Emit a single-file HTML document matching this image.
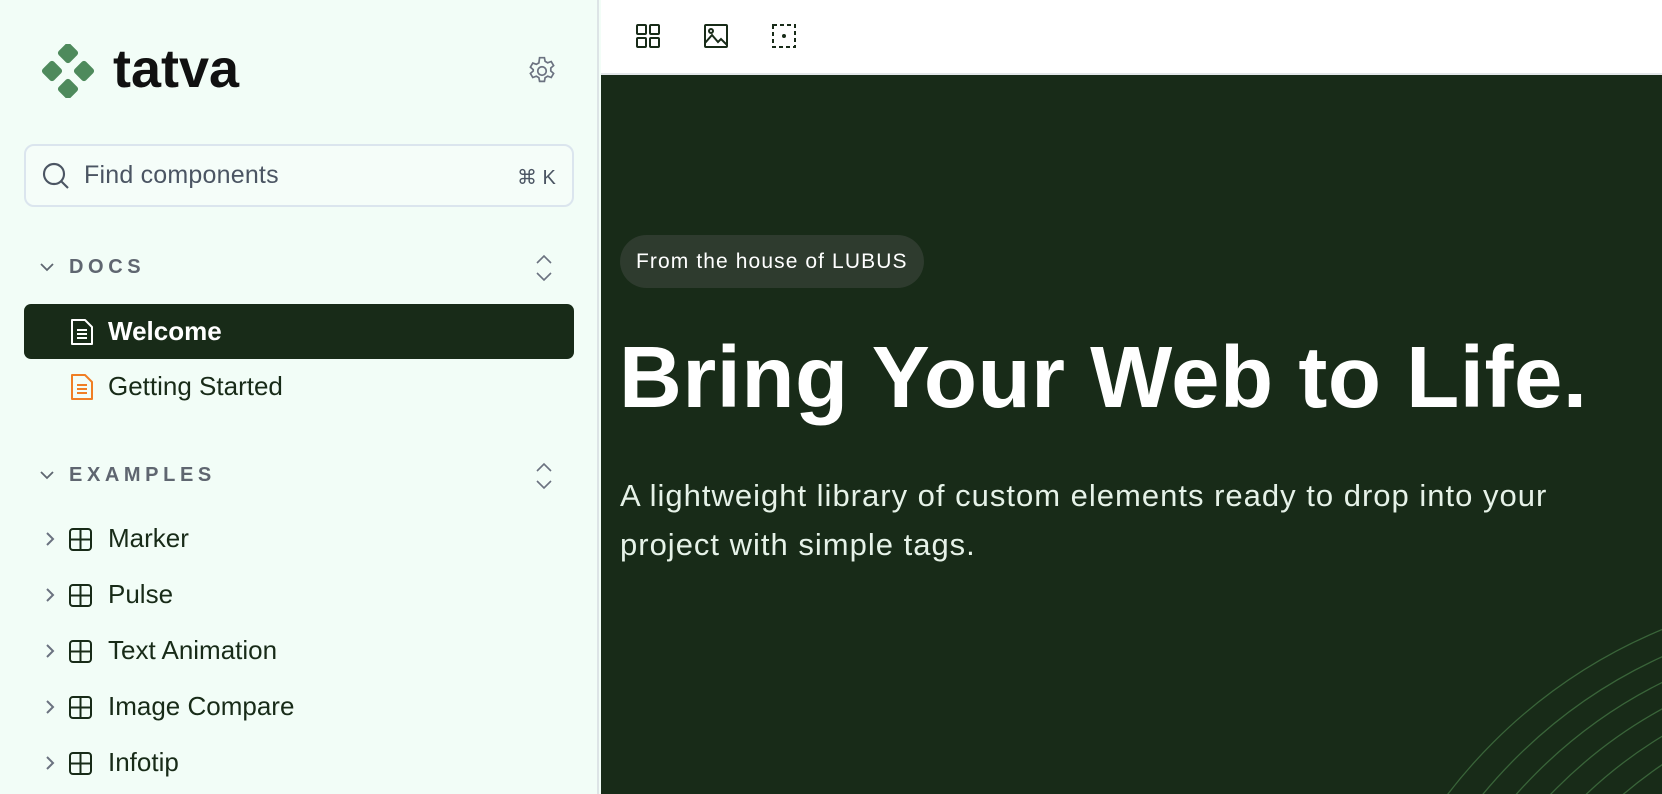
<!DOCTYPE html>
<html><head><meta charset="utf-8"><style>
*{box-sizing:border-box;margin:0;padding:0}
html,body{width:1662px;height:794px;overflow:hidden}
body{font-family:"Liberation Sans",sans-serif;background:#f2fdf7;position:relative}
.side{position:absolute;left:0;top:0;width:599px;height:794px;background:#f2fdf7;border-right:2px solid #dde4e6;overflow:hidden}
.main{position:absolute;left:601px;top:0;width:1061px;height:794px;background:#182b18;overflow:hidden}
.tool{position:absolute;left:0;top:0;right:0;height:75px;background:#fff;border-bottom:2px solid #e3e7ea}
.row{position:absolute;left:24px;width:550px;height:55px;display:flex;align-items:center;font-size:26px;color:#182b18}
.hdr{position:absolute;font-size:20px;font-weight:bold;letter-spacing:4.6px;color:#5f6670}
</style></head><body>
<div class="side">
 <svg style="position:absolute;left:40px;top:44px" width="56" height="54" viewBox="0 0 56 54">
  <g fill="#4e8a5c"><rect x="20" y="1" width="16" height="16" rx="3" transform="rotate(45 28 9)"/><rect x="4" y="19" width="16" height="16" rx="3" transform="rotate(45 12 27)"/><rect x="36" y="19" width="16" height="16" rx="3" transform="rotate(45 44 27)"/><rect x="20" y="37" width="16" height="16" rx="3" transform="rotate(45 28 45)"/></g>
 </svg>
 <div style="position:absolute;left:113px;top:38px;font-size:54px;font-weight:bold;color:#111;letter-spacing:0px">tatva</div>
 <svg style="position:absolute;left:525px;top:54px" width="34" height="34" viewBox="0 0 24 24" fill="none" stroke="#6b7280" stroke-width="1.2"><path d="M10.3 2.6h3.4l.5 2.6 1.8 1 2.5-.9 1.7 2.9-2 1.7v2.1l2 1.7-1.7 2.9-2.5-.9-1.8 1-.5 2.6h-3.4l-.5-2.6-1.8-1-2.5.9-1.7-2.9 2-1.7V11l-2-1.7 1.7-2.9 2.5.9 1.8-1z"/><circle cx="12" cy="12" r="3"/></svg>
 <div style="position:absolute;left:24px;top:144px;width:550px;height:63px;border:2px solid #dbe5ee;border-radius:10px;background:#f5fdf9"></div>
 <svg style="position:absolute;left:40px;top:160px" width="32" height="32" viewBox="0 0 24 24" fill="none" stroke="#4b5563" stroke-width="1.6"><circle cx="10.5" cy="10.5" r="7.5"/><path d="M16 16l5 5"/></svg>
 <div style="position:absolute;left:84px;top:161px;font-size:25px;color:#4b5563;letter-spacing:0.2px">Find components</div>
 <div style="position:absolute;left:517px;top:165px;font-size:20px;color:#4b5563">⌘ K</div>

 <svg style="position:absolute;left:38px;top:260px" width="18" height="14" viewBox="0 0 18 14" fill="none" stroke="#5f6670" stroke-width="1.8"><path d="M3 4l6 6 6-6"/></svg>
 <div class="hdr" style="left:69px;top:256px">DOCS</div>
 <svg style="position:absolute;left:533px;top:252px" width="22" height="32" viewBox="0 0 22 32" fill="none" stroke="#6b7280" stroke-width="1.6"><path d="M4 11l7-7 7 7M4 21l7 7 7-7"/></svg>

 <div class="row" style="top:304px;background:#182b18;border-radius:7px;color:#fff;font-weight:bold">
  <svg style="margin-left:46px;margin-right:14px" width="24" height="28" viewBox="0 0 24 28" fill="none" stroke="#fff" stroke-width="2" stroke-linejoin="round"><path d="M2 2h13l7 7v17H2z"/><path d="M7 12h10M7 16h10M7 20h10"/></svg>Welcome</div>
 <div class="row" style="top:359px">
  <svg style="margin-left:46px;margin-right:14px" width="24" height="28" viewBox="0 0 24 28" fill="none" stroke="#f07e24" stroke-width="2" stroke-linejoin="round"><path d="M2 2h13l7 7v17H2z"/><path d="M7 12h10M7 16h10M7 20h10"/></svg>Getting Started</div>

 <svg style="position:absolute;left:38px;top:468px" width="18" height="14" viewBox="0 0 18 14" fill="none" stroke="#5f6670" stroke-width="1.8"><path d="M3 4l6 6 6-6"/></svg>
 <div class="hdr" style="left:69px;top:464px">EXAMPLES</div>
 <svg style="position:absolute;left:533px;top:460px" width="22" height="32" viewBox="0 0 22 32" fill="none" stroke="#6b7280" stroke-width="1.6"><path d="M4 11l7-7 7 7M4 21l7 7 7-7"/></svg>

 <div class="row" style="top:511px"><svg style="margin-left:14px;margin-right:14px" width="56" height="26" viewBox="0 0 56 26" fill="none" stroke-width="2"><path d="M9 7l6 6-6 6" stroke="#6b7280"/><rect x="32" y="3" width="21" height="21" rx="3" stroke="#182b18"/><path d="M42.5 3v21M32 13.5h21" stroke="#182b18"/></svg>Marker</div>
 <div class="row" style="top:567px"><svg style="margin-left:14px;margin-right:14px" width="56" height="26" viewBox="0 0 56 26" fill="none" stroke-width="2"><path d="M9 7l6 6-6 6" stroke="#6b7280"/><rect x="32" y="3" width="21" height="21" rx="3" stroke="#182b18"/><path d="M42.5 3v21M32 13.5h21" stroke="#182b18"/></svg>Pulse</div>
 <div class="row" style="top:623px"><svg style="margin-left:14px;margin-right:14px" width="56" height="26" viewBox="0 0 56 26" fill="none" stroke-width="2"><path d="M9 7l6 6-6 6" stroke="#6b7280"/><rect x="32" y="3" width="21" height="21" rx="3" stroke="#182b18"/><path d="M42.5 3v21M32 13.5h21" stroke="#182b18"/></svg>Text Animation</div>
 <div class="row" style="top:679px"><svg style="margin-left:14px;margin-right:14px" width="56" height="26" viewBox="0 0 56 26" fill="none" stroke-width="2"><path d="M9 7l6 6-6 6" stroke="#6b7280"/><rect x="32" y="3" width="21" height="21" rx="3" stroke="#182b18"/><path d="M42.5 3v21M32 13.5h21" stroke="#182b18"/></svg>Image Compare</div>
 <div class="row" style="top:735px"><svg style="margin-left:14px;margin-right:14px" width="56" height="26" viewBox="0 0 56 26" fill="none" stroke-width="2"><path d="M9 7l6 6-6 6" stroke="#6b7280"/><rect x="32" y="3" width="21" height="21" rx="3" stroke="#182b18"/><path d="M42.5 3v21M32 13.5h21" stroke="#182b18"/></svg>Infotip</div>
</div>

<div class="main">
 <div class="tool">
  <svg style="position:absolute;left:34px;top:23px" width="26" height="26" viewBox="0 0 26 26" fill="none" stroke="#182b18" stroke-width="2"><rect x="2" y="2" width="9" height="9" rx="1"/><rect x="15" y="2" width="9" height="9" rx="1"/><rect x="2" y="15" width="9" height="9" rx="1"/><rect x="15" y="15" width="9" height="9" rx="1"/></svg>
  <svg style="position:absolute;left:102px;top:23px" width="26" height="26" viewBox="0 0 26 26" fill="none" stroke="#182b18" stroke-width="2"><rect x="2" y="2" width="22" height="22" rx="1"/><circle cx="8" cy="8" r="2"/><path d="M2 20l7-8 6 7 3-3 6 6"/></svg>
  <svg style="position:absolute;left:170px;top:23px" width="26" height="26" viewBox="0 0 26 26" fill="none" stroke="#182b18" stroke-width="2" stroke-dasharray="4 3"><rect x="2" y="2" width="22" height="22"/><circle cx="13" cy="13" r="1" fill="#182b18" stroke-dasharray="none"/></svg>
 </div>
 <div style="position:absolute;left:19px;top:235px;height:53px;padding:0 16px;border-radius:27px;background:#2e3b2e;color:#fff;font-size:21px;letter-spacing:1.1px;line-height:53px;white-space:nowrap">From the house of LUBUS</div>
 <div style="position:absolute;left:18px;top:328px;font-size:87px;font-weight:bold;color:#fff;letter-spacing:0.5px;white-space:nowrap">Bring Your Web to Life.</div>
 <div style="position:absolute;left:19px;top:471px;width:935px;font-size:31px;letter-spacing:1px;line-height:49px;color:#e6f2e8">A lightweight library of custom elements ready to drop into your project with simple tags.</div>
 <svg style="position:absolute;left:0;top:0" width="1061" height="794" viewBox="0 0 1061 794" fill="none" stroke="#3f6e3f" stroke-width="1.3" opacity="0.85">
  <circle cx="1260" cy="1110" r="520"/><circle cx="1268" cy="1112" r="500"/><circle cx="1276" cy="1114" r="482"/><circle cx="1284" cy="1116" r="464"/><circle cx="1292" cy="1118" r="446"/><circle cx="1300" cy="1120" r="428"/><circle cx="1308" cy="1122" r="410"/><circle cx="1316" cy="1124" r="392"/><circle cx="1324" cy="1126" r="374"/><circle cx="1332" cy="1128" r="356"/><circle cx="1340" cy="1130" r="338"/><circle cx="1348" cy="1132" r="320"/>
 </svg>
</div>
</body></html>
